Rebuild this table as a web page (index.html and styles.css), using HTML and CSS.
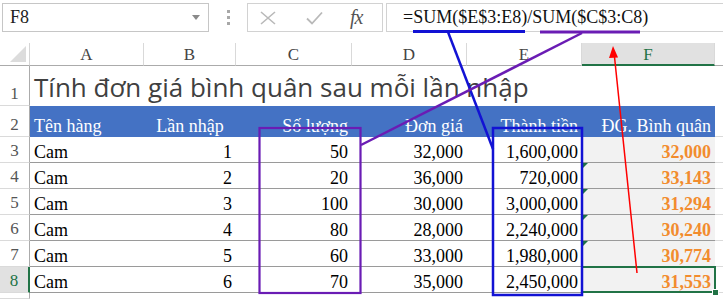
FILE: index.html
```html
<!DOCTYPE html>
<html lang="vi">
<head>
<meta charset="utf-8">
<link rel="stylesheet" href="styles.css">
</head>
<body>
<div class="fbar">
  <div class="namebox"><span>F8</span><svg class="dd" width="8" height="5" viewBox="0 0 8 5"><path d="M0 0H8L4 5Z" fill="#8a8a8a"/></svg></div>
  <div class="grip"><i></i><i></i><i></i></div>
  <div class="fxbox">
    <svg class="ic-x" width="18" height="14" viewBox="0 0 18 14"><path d="M2 1L16 13M16 1L2 13" stroke="#b9b9b9" stroke-width="1.6" fill="none"/></svg>
    <svg class="ic-ok" width="17" height="14" viewBox="0 0 17 14"><path d="M1 7.5L6 12.5L16 1.5" stroke="#b9b9b9" stroke-width="1.8" fill="none"/></svg>
    <span class="fx"><i>f</i>x</span>
  </div>
  <div class="formula">=SUM($E$3:E8)/SUM($C$3:C8)</div>
</div>
<div class="sheet">
  <div class="corner"><svg width="16" height="16" viewBox="0 0 16 16"><path d="M16 0V16H0Z" fill="#dcdcdc"/></svg></div>
  <div class="ch">A</div><div class="ch">B</div><div class="ch">C</div><div class="ch">D</div><div class="ch">E</div><div class="ch ch-sel">F</div><div class="ch ch-last"></div>

  <div class="rh">1</div><div class="title">Tính đơn giá bình quân sau mỗi lần nhập</div>

  <div class="rh">2</div>
  <div class="th">Tên hàng</div><div class="th th-c">Lần nhập</div><div class="th th-r">Số lượng</div><div class="th th-r">Đơn giá</div><div class="th th-r">Thành tiền</div><div class="th th-r">ĐG. Bình quân</div><div class="g"></div>

  <div class="rh">3</div>
  <div class="td">Cam</div><div class="td r">1</div><div class="td r">50</div><div class="td r">32,000</div><div class="td r">1,600,000</div><div class="td r res">32,000</div><div class="g"></div>

  <div class="rh">4</div>
  <div class="td">Cam</div><div class="td r">2</div><div class="td r">20</div><div class="td r">36,000</div><div class="td r">720,000</div><div class="td r res err">33,143</div><div class="g"></div>

  <div class="rh">5</div>
  <div class="td">Cam</div><div class="td r">3</div><div class="td r">100</div><div class="td r">30,000</div><div class="td r">3,000,000</div><div class="td r res err">31,294</div><div class="g"></div>

  <div class="rh">6</div>
  <div class="td">Cam</div><div class="td r">4</div><div class="td r">80</div><div class="td r">28,000</div><div class="td r">2,240,000</div><div class="td r res err">30,240</div><div class="g"></div>

  <div class="rh">7</div>
  <div class="td">Cam</div><div class="td r">5</div><div class="td r">60</div><div class="td r">33,000</div><div class="td r">1,980,000</div><div class="td r res err">30,774</div><div class="g"></div>

  <div class="rh rh-sel">8</div>
  <div class="td">Cam</div><div class="td r">6</div><div class="td r">70</div><div class="td r">35,000</div><div class="td r">2,450,000</div><div class="td r res sel">31,553</div><div class="g"></div>

  <div class="rh"></div><div class="blank"></div>
</div>
<svg class="annot" width="723" height="299" viewBox="0 0 723 299">
  <line x1="413" y1="31.5" x2="525" y2="31.5" stroke="#1212d4" stroke-width="3"/>
  <line x1="540" y1="32" x2="640" y2="32" stroke="#6a1cb4" stroke-width="3"/>
  <line x1="448" y1="32" x2="493" y2="149" stroke="#1212d4" stroke-width="2.5"/>
  <rect x="493" y="128" width="89" height="167" fill="none" stroke="#1212d4" stroke-width="2.5"/>
  <line x1="582" y1="33" x2="361" y2="145" stroke="#6a1cb4" stroke-width="2.5"/>
  <rect x="259.5" y="128" width="101" height="165" fill="none" stroke="#6a1cb4" stroke-width="2.2"/>
  <line x1="637" y1="273" x2="614.5" y2="57" stroke="#ff0000" stroke-width="1.5"/>
  <path d="M613 46L609 58L618 57.5Z" fill="#ff0000"/>
</svg>
</body>
</html>
```
FILE: styles.css
```css
html, body {
  margin: 0;
  padding: 0;
}
body {
  width: 723px;
  height: 299px;
  overflow: hidden;
  position: relative;
  background: #fff;
  font-family: "Liberation Serif", "Times New Roman", serif;
  color: #000;
}

/* formula bar */
.fbar {
  display: flex;
  height: 43px;
  box-sizing: border-box;
  padding: 3px 0 0 2px;
}
.namebox {
  width: 207px;
  height: 29px;
  box-sizing: border-box;
  border: 1px solid #c6c6c6;
  display: flex;
  align-items: center;
  justify-content: space-between;
  padding: 0 8px 0 7px;
  font-size: 18px;
  color: #222;
}
.grip {
  width: 38px;
  height: 29px;
  display: flex;
  flex-direction: column;
  align-items: center;
  justify-content: center;
  gap: 3px;
}
.grip i {
  display: block;
  width: 3px;
  height: 3px;
  background: #a8a8a8;
}
.fxbox {
  width: 136px;
  height: 29px;
  box-sizing: border-box;
  border: 1px solid #d2d2d2;
  display: flex;
  align-items: center;
  padding-left: 11px;
}
.ic-ok { margin-left: 29px; }
.fx {
  margin-left: 27px;
  font-size: 20px;
  color: #555;
  font-style: italic;
  letter-spacing: -1px;
}
.fx i { font-style: italic; }
.formula {
  flex: 1;
  height: 29px;
  margin-left: 3px;
  box-sizing: border-box;
  border: 1px solid #d2d2d2;
  border-right: none;
  padding-left: 16px;
  font-size: 18px;
  line-height: 27px;
  color: #111;
}

/* sheet grid */
.sheet {
  display: grid;
  grid-template-columns: 30px 114px 92px 116px 115px 115px 133px 1fr;
  grid-template-rows: 23px 40px 31px repeat(6, 26px) 1fr;
  height: 256px;
}
.corner {
  border-right: 1px solid #d5d5d5;
  border-bottom: 1px solid #ababab;
  display: flex;
  align-items: flex-end;
  justify-content: flex-end;
  padding: 0 3px 3px 0;
}
.ch {
  border-right: 1px solid #d9d9d9;
  border-bottom: 1px solid #ababab;
  font-size: 17px;
  color: #444;
  display: flex;
  align-items: flex-end;
  justify-content: center;
  line-height: 20px;
}
.ch-sel {
  background: #e1e1e1;
  border-bottom: 2px solid #217346;
  color: #217346;
  line-height: 19px;
}
.ch-last { border-right: none; }

.rh {
  border-right: 1px solid #ababab;
  border-bottom: 1px solid #dadada;
  font-size: 17px;
  color: #555;
  display: flex;
  align-items: flex-end;
  justify-content: center;
  line-height: 20px;
  padding-bottom: 1px;
}
.rh-sel {
  background: #e1e1e1;
  color: #217346;
  border-right: 2px solid #217346;
}

.title {
  grid-column: 2 / -1;
  font-family: "Open Sans", "Noto Sans", sans-serif;
  font-size: 26px;
  color: #404040;
  line-height: 30px;
  display: flex;
  align-items: flex-end;
  padding: 0 0 4px 4px;
  white-space: nowrap;
}

.th {
  background: #4472c4;
  color: #fff;
  font-size: 18px;
  line-height: 20px;
  display: flex;
  align-items: flex-end;
  padding: 0 4px 1px 4px;
  white-space: nowrap;
}
.th-c { justify-content: center; }
.th-r { justify-content: flex-end; }

.td {
  font-size: 18px;
  line-height: 20px;
  display: flex;
  align-items: flex-end;
  padding: 0 4px 0 4px;
  border-bottom: 1px solid #9a9a9a;
  white-space: nowrap;
  position: relative;
}
.td.r { justify-content: flex-end; }
.res {
  background: #f2f2f2;
  color: #f28c2e;
  font-weight: bold;
}
.err::before {
  content: "";
  position: absolute;
  left: 0;
  top: 0;
  border-top: 6px solid #1e7145;
  border-right: 6px solid transparent;
}
.sel::after {
  content: "";
  position: absolute;
  left: -1px;
  top: -1px;
  right: -1px;
  bottom: -1px;
  border: 2px solid #217346;
}
.sel::before {
  content: "";
  position: absolute;
  right: -4px;
  bottom: -4px;
  width: 5px;
  height: 5px;
  background: #217346;
  border: 1px solid #fff;
  z-index: 2;
}
.g {
  border-bottom: 1px solid #dadada;
}
.blank {
  grid-column: 2 / -1;
}

.annot {
  position: absolute;
  left: 0;
  top: 0;
  pointer-events: none;
}
```
